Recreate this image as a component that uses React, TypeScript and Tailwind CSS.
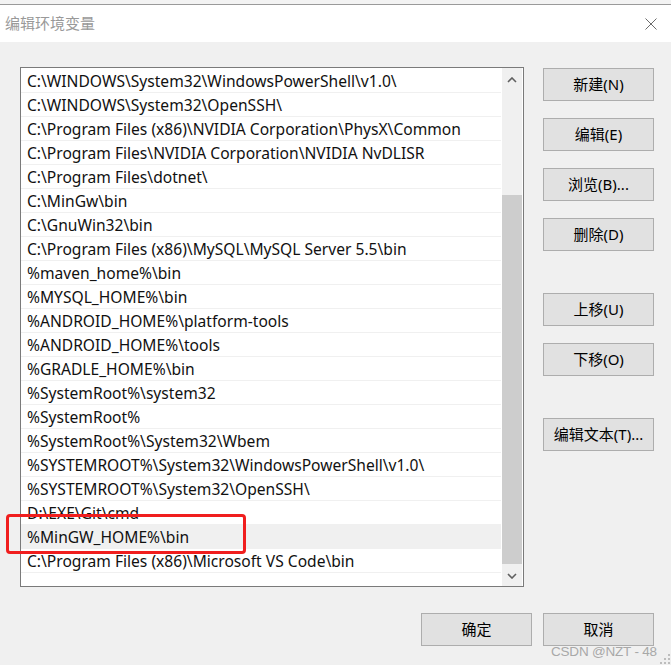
import React from 'react';

const paths = [
    'C:\\WINDOWS\\System32\\WindowsPowerShell\\v1.0\\',
    'C:\\WINDOWS\\System32\\OpenSSH\\',
    'C:\\Program Files (x86)\\NVIDIA Corporation\\PhysX\\Common',
    'C:\\Program Files\\NVIDIA Corporation\\NVIDIA NvDLISR',
    'C:\\Program Files\\dotnet\\',
    'C:\\MinGw\\bin',
    'C:\\GnuWin32\\bin',
    'C:\\Program Files (x86)\\MySQL\\MySQL Server 5.5\\bin',
    '%maven_home%\\bin',
    '%MYSQL_HOME%\\bin',
    '%ANDROID_HOME%\\platform-tools',
    '%ANDROID_HOME%\\tools',
    '%GRADLE_HOME%\\bin',
    '%SystemRoot%\\system32',
    '%SystemRoot%',
    '%SystemRoot%\\System32\\Wbem',
    '%SYSTEMROOT%\\System32\\WindowsPowerShell\\v1.0\\',
    '%SYSTEMROOT%\\System32\\OpenSSH\\',
    'D:\\EXE\\Git\\cmd',
    '%MinGW_HOME%\\bin',
    'C:\\Program Files (x86)\\Microsoft VS Code\\bin',
];

const SELECTED = 19;

const Button: React.FC<{ label: string; className?: string }> = ({ label, className = '' }) => (
    <div
        className={`w-[111px] h-[33px] border border-[#adadad] bg-[#e1e1e1] flex items-center justify-center text-[15px] text-black ${className}`}
    >
        {label}
    </div>
);

const Chevron: React.FC<{ up?: boolean }> = ({ up }) => (
    <svg width="10" height="6" viewBox="0 0 10 6">
        <polyline
            points={up ? '1,5 5,1 9,5' : '1,1 5,5 9,1'}
            fill="none"
            stroke="#606060"
            strokeWidth="1.6"
        />
    </svg>
);

export default function App() {
    return (
        <div
            className="relative w-[671px] h-[665px] overflow-hidden bg-[#f0f0f0] text-black"
            style={{ fontFamily: '"Noto Sans", "Noto Sans CJK SC", sans-serif' }}
        >
            {/* window top edge + title bar */}
            <div className="h-[4px] bg-[#f3f3f3]" />
            <div className="h-[1px] bg-[#9a9a9a]" />
            <div className="h-[37px] bg-white flex items-center justify-between pl-[5px] pr-[14px]">
                <span className="text-[15px] text-[#999999]" style={{ fontFamily: '"Noto Sans CJK SC", sans-serif' }}>
                    编辑环境变量
                </span>
                <svg width="12" height="12" viewBox="0 0 12 12">
                    <path d="M0.5 0.5 L11.5 11.5 M11.5 0.5 L0.5 11.5" stroke="#6b6b6b" strokeWidth="1" />
                </svg>
            </div>

            {/* body */}
            <div className="flex pl-[20px] pt-[25px] gap-[19px]">
                <div className="w-[504px] h-[520px] border border-[#7a7a7a] bg-white flex">
                    <div className="flex-1 pt-[1px] pr-[1px]">
                        {paths.map((p, i) => (
                            <div
                                key={p}
                                className={`h-[24px] border-b border-[#f0f0f0] flex items-center pl-[6px] pt-[3px] text-[15.6px] text-[#111] whitespace-nowrap overflow-hidden ${
                                    i === SELECTED ? 'bg-[#f0f0f0]' : ''
                                }`}
                            >
                                {p}
                            </div>
                        ))}
                    </div>
                    <div className="w-[20px] mr-[1px] bg-[#f0f0f0] flex flex-col">
                        <div className="h-[24px] flex items-center justify-center">
                            <Chevron up />
                        </div>
                        <div className="flex-1 pt-[103px]">
                            <div className="h-[369px] bg-[#cdcdcd]" />
                        </div>
                        <div className="h-[21px] flex items-center justify-center">
                            <Chevron />
                        </div>
                    </div>
                </div>

                <div className="flex flex-col pt-[1px]">
                    <Button label="新建(N)" />
                    <Button label="编辑(E)" className="mt-[17px]" />
                    <Button label="浏览(B)..." className="mt-[17px]" />
                    <Button label="删除(D)" className="mt-[17px]" />
                    <Button label="上移(U)" className="mt-[42px]" />
                    <Button label="下移(O)" className="mt-[17px]" />
                    <Button label="编辑文本(T)..." className="mt-[42px]" />
                </div>
            </div>

            {/* footer buttons */}
            <div className="flex justify-end gap-[11px] pr-[17px] pt-[26px]">
                <Button label="确定" />
                <Button label="取消" />
            </div>

            {/* annotation highlight */}
            <div className="absolute left-[6px] top-[514px] w-[240px] h-[40px] border-[3px] border-[#f01e1e] rounded-[4px]" />

            {/* watermark */}
            <div
                className="absolute left-[551px] top-[642px] text-[13.5px] text-[#a8a8a8] tracking-[-0.2px]"
                style={{ fontFamily: '"Liberation Sans", sans-serif' }}
            >
                CSDN @NZT - 48
            </div>

            {/* resize grip */}
            <svg className="absolute right-[1px] bottom-[1px]" width="10" height="10" viewBox="0 0 10 10">
                <rect x="8" y="0" width="2" height="2" fill="#bdbdbd" />
                <rect x="4" y="4" width="2" height="2" fill="#bdbdbd" />
                <rect x="8" y="4" width="2" height="2" fill="#bdbdbd" />
                <rect x="0" y="8" width="2" height="2" fill="#bdbdbd" />
                <rect x="4" y="8" width="2" height="2" fill="#bdbdbd" />
                <rect x="8" y="8" width="2" height="2" fill="#bdbdbd" />
            </svg>
        </div>
    );
}
